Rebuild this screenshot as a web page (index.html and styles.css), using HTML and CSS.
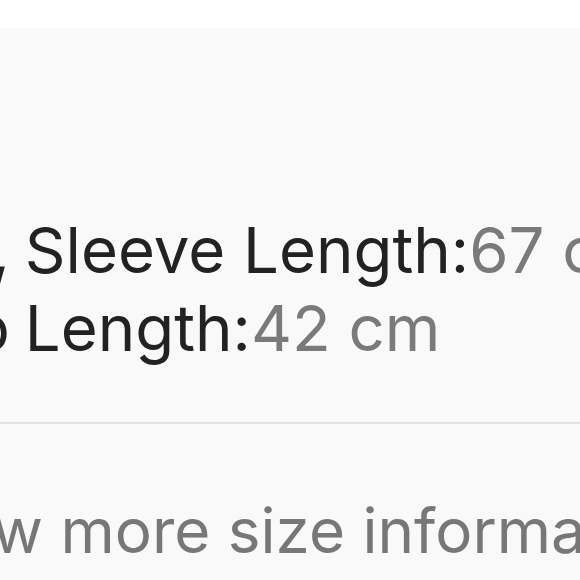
FILE: index.html
```html
<!DOCTYPE html>
<html lang="en">
<head>
    <meta charset="UTF-8">
    <meta name="viewport" content="width=device-width, initial-scale=1.0">
    <title>Size Info</title>
    <link rel="stylesheet" href="styles.css">
</head>
<body>
    <div class="top-bar"></div>

    <div class="panel">
        <div class="size-list">
            <p class="size-row"><span class="lead">48 cm,</span> Sleeve Length:<span class="val">67 cm</span></p>
            <p class="size-row"><span class="lead">Top</span> Length:<span class="val">42 cm</span></p>
        </div>

        <div class="more-link"><span class="lead-more">View</span> more size information</div>
    </div>
</body>
</html>
```
FILE: styles.css
```css
body {
    font-family: Inter, "Noto Sans", sans-serif;
    background-color: #f9f9f9;
    margin: 0;
    overflow: hidden;
}

.top-bar {
    height: 28px;
    background-color: #fff;
}

.panel {
    overflow: hidden;
}

.size-list {
    padding-top: 183px;
    padding-bottom: 55px;
    border-bottom: 2px solid #e2e2e2;
}

.size-row {
    margin: 0 0 0 -3px;
    white-space: nowrap;
    font-size: 63.5px;
    line-height: 78px;
    color: #222;
}

.size-row .val {
    color: #7a7a7a;
}

.lead {
    display: inline-flex;
    justify-content: flex-end;
    width: 13px;
    margin-right: -3px;
    overflow: hidden;
    vertical-align: bottom;
}

.more-link {
    white-space: nowrap;
    font-size: 62px;
    line-height: 78px;
    padding-top: 68px;
    color: #777;
}

.lead-more {
    display: inline-flex;
    justify-content: flex-end;
    width: 44px;
    margin-left: -1px;
    overflow: hidden;
    vertical-align: bottom;
}
```
